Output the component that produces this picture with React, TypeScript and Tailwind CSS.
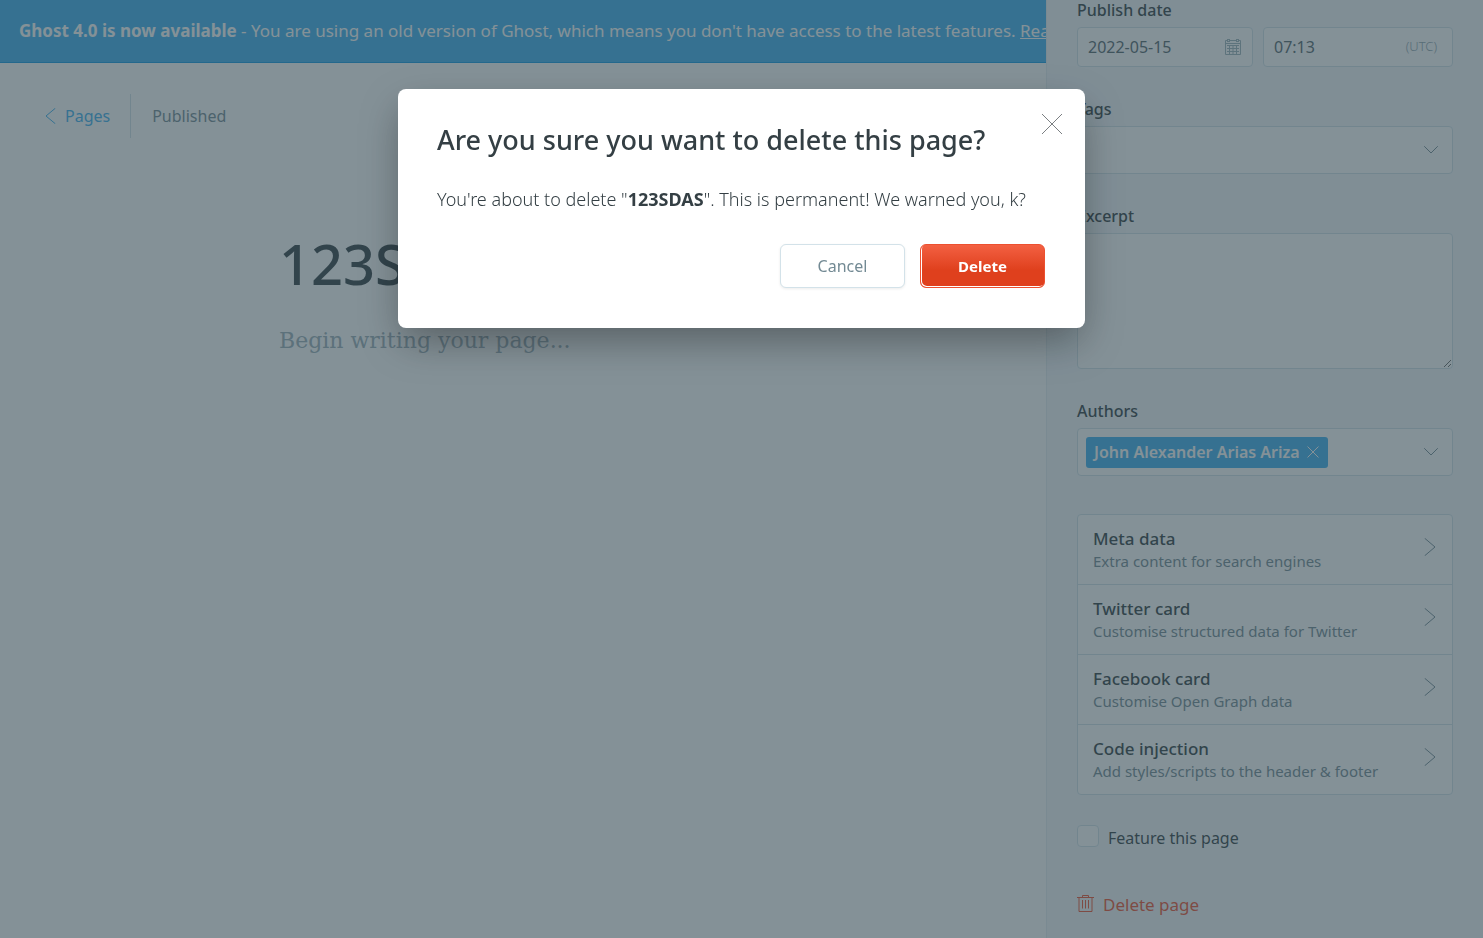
import React, { useState } from 'react';

const settingsCards = [
  { title: 'Meta data', description: 'Extra content for search engines' },
  { title: 'Twitter card', description: 'Customise structured data for Twitter' },
  { title: 'Facebook card', description: 'Customise Open Graph data' },
  { title: 'Code injection', description: 'Add styles/scripts to the header & footer' },
];

const box = 'rounded border border-[#d3e2e9] bg-white';
const label = 'block mb-[7px] text-base leading-5 font-medium text-[#343f44]';

function Chevron({ className, points, viewBox }: { className: string; points: string; viewBox: string }) {
  return (
    <svg className={className} viewBox={viewBox} fill="none" stroke="currentColor" strokeLinecap="round" aria-hidden="true">
      <polyline points={points} />
    </svg>
  );
}

function Cross({ className }: { className: string }) {
  return (
    <svg className={className} viewBox="0 0 22 22" fill="none" stroke="currentColor" aria-hidden="true">
      <path vectorEffect="non-scaling-stroke" d="M1 1 21 21M21 1 1 21" />
    </svg>
  );
}

function CalendarIcon() {
  return (
    <svg className="size-4 shrink-0 text-[#9fb3bc]" viewBox="0 0 16 16" fill="none" stroke="currentColor" aria-hidden="true">
      <path d="M2.5 1.5H.5v14h15v-14h-2M5 1.5h6M.5 4.5h15" />
      <rect x="2.5" y=".5" width="2" height="2" />
      <rect x="11.5" y=".5" width="2" height="2" />
      <path d="M2 6.5h12M2 9.5h12M2 12.5h12M4.500 6v9M8 6v9M11.500 6v9" />
    </svg>
  );
}

function TrashIcon() {
  return (
    <svg className="mb-1 h-[18px] w-[17px]" viewBox="0 0 17 18" fill="none" stroke="currentColor" aria-hidden="true">
      <path d="M0 3.500h17M5.500 3V1.5h6V3M2 4v13.500h13V4M5.500 6v8.500M8.500 6v8.500M11.500 6v8.500" />
    </svg>
  );
}

function Banner() {
  return (
    <div className="flex h-[63px] items-center overflow-hidden border-b border-[#0f9ae4] bg-[#3eb0ef] pl-[19px] text-[17px] whitespace-nowrap text-white">
      <p>
        <strong className="font-bold">Ghost 4.0 is now available</strong> - You are using an old version of Ghost, which
        means you don't have access to the latest features.{' '}
        <a href="#upgrade" className="underline">Read more</a>
      </p>
    </div>
  );
}

function Editor() {
  return (
    <main className="min-w-0 flex-1">
      <Banner />
      <nav className="mt-[31px] flex h-11 items-center pl-[45px] text-base">
        <a href="#pages" className="flex h-full items-center gap-2 border-r border-[#d3e2e9] pr-5 text-[#3eb0ef]">
          <Chevron className="h-4 w-3" viewBox="0 0 12 16" points="10,0.5 1,8 10,15.5" />
          Pages
        </a>
        <span className="pl-[21px] text-[#738a94]">Published</span>
      </nav>
      <div className="mt-[89px] pl-[279px]">
        <input
          aria-label="Page title"
          defaultValue="123SDAS"
          className="block h-[72px] w-full text-[56px] font-medium text-[#343f44] outline-none"
        />
        <p className="mt-[26px] font-['DejaVu_Serif',serif] text-[22px] leading-8 text-[#9baeb8]">Begin writing your page...</p>
      </div>
    </main>
  );
}

function Settings() {
  return (
    <aside className="w-[437px] shrink-0 border-l border-[#e5eef3] bg-[#f4f8fb] pr-[30px] pl-[30px] text-[#343f44]">
      <div className="mb-8 flex gap-[10px]">
        <div className="w-44">
          <label htmlFor="date" className={label}>Publish date</label>
          <div className={`flex h-10 items-center pr-[11px] pl-[10px] ${box}`}>
            <input id="date" defaultValue="2022-05-15" className="min-w-0 flex-1 text-base text-[#54666d] outline-none" />
            <CalendarIcon />
          </div>
        </div>
        <div className="min-w-0 flex-1 pt-[27px]">
          <div className={`flex h-10 items-center pr-[15px] pl-[10px] ${box}`}>
            <input aria-label="Publish time" defaultValue="07:13" className="min-w-0 flex-1 text-base text-[#54666d] outline-none" />
            <span className="text-[13px] font-light text-[#90a5af]">(UTC)</span>
          </div>
        </div>
      </div>

      <label htmlFor="tags" className={label}>Tags</label>
      <div className={`mb-8 flex h-12 items-center pr-[14px] pl-2 ${box}`}>
        <input id="tags" className="min-w-0 flex-1 outline-none" />
        <Chevron className="h-2 w-[14px] text-[#738a94]" viewBox="0 0 14 8" points="0.5,0.5 7,7 13.5,0.5" />
      </div>

      <label htmlFor="excerpt" className={label}>Excerpt</label>
      <textarea id="excerpt" className={`mb-8 block h-[136px] w-full resize-y p-2 outline-none ${box}`} />

      <label htmlFor="authors" className={label}>Authors</label>
      <div className={`mb-[38px] flex h-12 items-center pr-[14px] pl-2 ${box}`}>
        <span className="flex h-[31px] items-center gap-[7px] rounded-[3px] bg-[#3eb0ef] pr-[9px] pl-2 text-base font-semibold whitespace-nowrap text-white">
          John Alexander Arias Ariza
          <button type="button" aria-label="Remove author">
            <Cross className="size-3" />
          </button>
        </span>
        <input id="authors" className="min-w-0 flex-1 outline-none" />
        <Chevron className="h-2 w-[14px] text-[#738a94]" viewBox="0 0 14 8" points="0.5,0.5 7,7 13.5,0.5" />
      </div>

      <ul className={`divide-y divide-[#d3e2e9] ${box}`}>
        {settingsCards.map((card) => (
          <li key={card.title}>
            <button type="button" className="flex h-[69px] w-full items-center justify-between pr-4 pl-[15px] text-left">
              <span>
                <b className="block text-[17px] leading-6 font-medium">{card.title}</b>
                <span className="block text-[15px] leading-[21px] text-[#738a94]">{card.description}</span>
              </span>
              <Chevron className="mb-[5px] h-[18px] w-3 text-[#738a94]" viewBox="0 0 12 18" points="1,0.5 11,9 1,17.5" />
            </button>
          </li>
        ))}
      </ul>

      <label className="mt-[30px] flex h-[22px] items-center gap-[9px] text-base">
        <input type="checkbox" className={`size-[22px] appearance-none ${box}`} />
        <span className="pt-1">Feature this page</span>
      </label>

      <button type="button" className="mt-11 flex items-center gap-[9px] text-[17px] leading-7 text-[#f05230]">
        <TrashIcon />
        Delete page
      </button>
    </aside>
  );
}

function DeleteDialog({ onClose }: { onClose: () => void }) {
  return (
    <div className="fixed inset-0 flex items-start justify-center bg-[rgba(50,72,82,0.6)] pt-[89px]">
      <section
        role="dialog"
        aria-modal="true"
        aria-labelledby="dialog-title"
        className="relative w-[687px] rounded-lg bg-white pt-8 pr-10 pb-10 pl-[39px] text-[#343f44] shadow-[0_16px_40px_-4px_rgba(0,0,0,0.35)]"
      >
        <h1 id="dialog-title" className="text-[27px] leading-[37px] font-medium">Are you sure you want to delete this page?</h1>
        <button type="button" aria-label="Close" onClick={onClose} className="absolute top-6 right-[22px] text-[#7b7f82]">
          <Cross className="size-[22px]" />
        </button>
        <p className="mt-[27px] text-lg leading-7 font-light">
          You're about to delete "<strong className="font-bold">123SDAS</strong>". This is permanent! We warned you, k?
        </p>
        <div className="mt-[31px] flex justify-end gap-[15px]">
          <button
            type="button"
            onClick={onClose}
            className="h-11 w-[125px] rounded-md border border-[#d3e2e9] bg-white text-base text-[#738a94] shadow-[0_1px_3px_rgba(0,0,0,0.08)]"
          >
            Cancel
          </button>
          <button
            type="button"
            className="h-11 w-[125px] rounded-md border border-[#ec5030] bg-[linear-gradient(#f36042,#df401d_60%)] text-[15px] font-bold text-white shadow-[inset_1px_-1px_0_#fff]"
          >
            Delete
          </button>
        </div>
      </section>
    </div>
  );
}

export default function App() {
  const [open, setOpen] = useState(true);
  return (
    <div className="flex h-screen overflow-hidden bg-white font-['Noto_Sans','Open_Sans',sans-serif]">
      <Editor />
      <Settings />
      {open && <DeleteDialog onClose={() => setOpen(false)} />}
    </div>
  );
}
